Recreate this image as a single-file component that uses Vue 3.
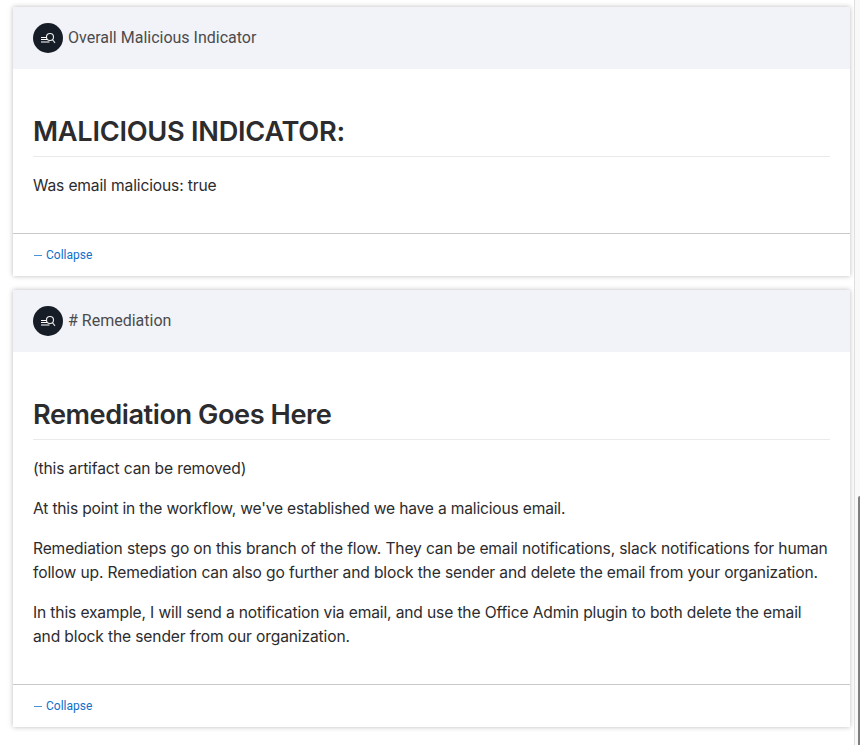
<script setup>
const cards = [
  {
    title: 'Overall Malicious Indicator',
    heading: 'MALICIOUS INDICATOR:',
    tone: 'caps',
    paragraphs: [['Was email malicious: true']],
  },
  {
    title: '# Remediation',
    heading: 'Remediation Goes Here',
    tone: 'mixed',
    paragraphs: [
      ['(this artifact can be removed)'],
      ["At this point in the workflow, we've established we have a malicious email."],
      [
        'Remediation steps go on this branch of the flow. They can be email notifications, slack notifications for human',
        'follow up. Remediation can also go further and block the sender and delete the email from your organization.',
      ],
      [
        'In this example, I will send a notification via email, and use the Office Admin plugin to both delete the email',
        'and block the sender from our organization.',
      ],
    ],
  },
]
</script>

<template>
  <div class="page">
    <main class="list">
      <section v-for="card in cards" :key="card.title" class="card">
        <header class="card-header">
          <span class="badge">
            <svg width="30" height="30" viewBox="0 0 30 30" fill="none" stroke="#fff">
              <path d="M8 14.5H13.2" stroke-width="1" />
              <path d="M8 16.5H14.2" stroke-width="1" />
              <path d="M8 19H16.5" stroke="#8d9196" stroke-width="2" />
              <circle cx="17" cy="14" r="3.5" stroke="#f0f1f2" stroke-width="1.1" />
              <path d="M19.4 16.6L22 19.8" stroke="#dfe1e3" stroke-width="1.1" />
            </svg>
          </span>
          <span class="title">{{ card.title }}</span>
        </header>
        <div class="body">
          <h1 :class="card.tone"><span>{{ card.heading }}</span></h1>
          <p v-for="(lines, i) in card.paragraphs" :key="i" :class="{ tight: i === 1 }">
            <span v-for="line in lines" :key="line" class="line"><span>{{ line }}</span></span>
          </p>
        </div>
        <footer class="card-footer">
          <a class="collapse"><i class="dash"></i><span>Collapse</span></a>
        </footer>
      </section>
    </main>
    <aside class="track"><div class="thumb"></div></aside>
  </div>
</template>

<style>
body {
  background: #fff;
  overflow: hidden;
}
</style>

<style scoped>
.page {
  display: flex;
  width: 860px;
  height: 745px;
  overflow: hidden;
}
.list {
  flex: 1;
  min-width: 0;
  padding: 7px 4px 0 13px;
  display: flex;
  flex-direction: column;
  gap: 14px;
}
.card {
  background: #fff;
  box-shadow: 0 0 5px rgba(0, 0, 0, 0.27);
}
.card-header {
  height: 62px;
  padding: 0 20px;
  display: flex;
  align-items: center;
  gap: 5px;
  background: #f2f3f8;
}
.badge {
  width: 30px;
  height: 30px;
  border-radius: 50%;
  background: #161d26;
}
.badge svg {
  display: block;
}
.title {
  font: 16px/24px Roboto, sans-serif;
  color: #4b4b4d;
}
.body {
  padding: 45px 20px 19px;
  font: 15.6px/24px Inter, sans-serif;
  color: #2c2c2e;
}
h1 {
  margin: 0 0 17px;
  padding-bottom: 7px;
  border-bottom: 1px solid #eaeaea;
  font-size: 27.2px;
  line-height: 35px;
  font-weight: 600;
  white-space: nowrap;
}
.caps {
  letter-spacing: -0.27px;
}
.mixed {
  letter-spacing: -0.45px;
}
p {
  margin: 0 0 16px;
  letter-spacing: -0.14px;
}
.tight {
  letter-spacing: -0.18px;
}
.line {
  display: block;
  white-space: nowrap;
}
.card-footer {
  height: 42px;
  border-top: 1px solid #c9c9cb;
  padding: 0 21px;
  display: flex;
  align-items: center;
}
.collapse {
  display: flex;
  align-items: center;
  gap: 4px;
  font: 12px/16px Roboto, sans-serif;
  color: #1070ca;
}
.dash {
  width: 8px;
  height: 1px;
  background: #4c94d6;
}
.track {
  box-sizing: border-box;
  width: 6px;
  border-left: 1px solid #dfdfdf;
  background: #f9f9f9;
  display: flex;
  justify-content: flex-end;
  align-items: flex-end;
}
.thumb {
  width: 2px;
  height: 249px;
  background: #7f7f7f;
  border-top-left-radius: 2px;
}
</style>
